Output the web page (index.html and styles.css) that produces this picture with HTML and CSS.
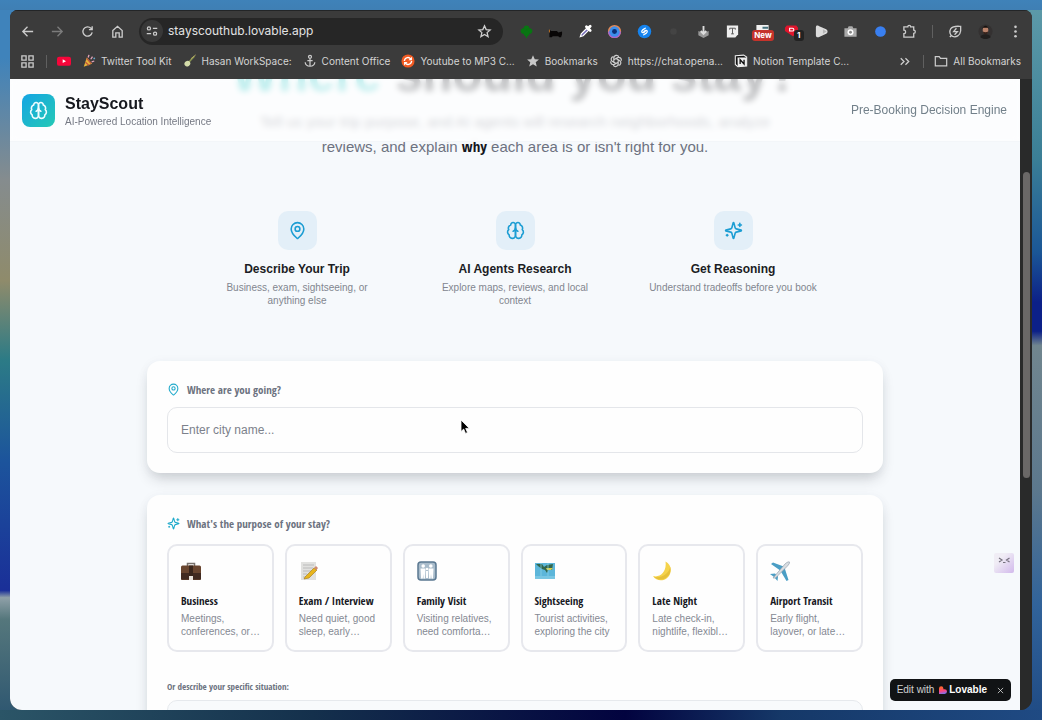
FILE: index.html
```html
<!DOCTYPE html>
<html lang="en">
<head>
<meta charset="utf-8">
<meta name="viewport" content="width=device-width, initial-scale=1">
<title>StayScout</title>
<link rel="stylesheet" href="styles.css">
</head>
<body>
<svg class="defs" aria-hidden="true">
  <symbol id="brain" viewBox="0 0 24 24"><path d="M12 5a3 3 0 1 0-5.997.125 4 4 0 0 0-2.526 5.77 4 4 0 0 0 .556 6.588A4 4 0 1 0 12 18Z"/><path d="M12 5a3 3 0 1 1 5.997.125 4 4 0 0 1 2.526 5.77 4 4 0 0 1-.556 6.588A4 4 0 1 1 12 18Z"/><path d="M15 13a4.500 4.500 0 0 1-3-4 4.500 4.500 0 0 1-3 4"/></symbol>
  <symbol id="pin" viewBox="0 0 24 24"><path d="M20 10c0 5-5.500 10.200-7.400 11.800a1 1 0 0 1-1.200 0C9.500 20.200 4 15 4 10a8 8 0 0 1 16 0"/><circle cx="12" cy="10" r="3"/></symbol>
  <symbol id="sparkles" viewBox="0 0 24 24"><path d="M9.937 15.500A2 2 0 0 0 8.500 14.063l-6.135-1.582a.5.5 0 0 1 0-.962L8.500 9.936A2 2 0 0 0 9.937 8.500l1.582-6.135a.5.5 0 0 1 .963 0L14.063 8.500A2 2 0 0 0 15.500 9.937l6.135 1.581a.5.5 0 0 1 0 .964L15.500 14.063a2 2 0 0 0-1.437 1.437l-1.582 6.135a.5.5 0 0 1-.963 0z"/><path d="M20 3v4M22 5h-4M4 17v2M5 18H3"/></symbol>
</svg>

<div class="window">
  <header class="chrome">
    <div class="toolbar">
      <nav class="nav-buttons" aria-label="Browser navigation">
        <button class="tool" aria-label="Back"><svg class="line" viewBox="0 0 16 16"><path d="M14 8H3M8 3 3 8l5 5"/></svg></button>
        <button class="tool faded" aria-label="Forward"><svg class="line" viewBox="0 0 16 16"><path d="M2 8h11M8 3l5 5-5 5"/></svg></button>
        <button class="tool" aria-label="Reload"><svg class="line" viewBox="0 0 16 16"><path d="M13 9a5 5 0 1 1-1.300-4.500L13 6M13 2.500V6H9.500"/></svg></button>
        <button class="tool" aria-label="Home"><svg class="line" viewBox="0 0 16 16"><path d="M3 7l5-4.500L13 7v7H9.800V9.500H6.200V14H3z"/></svg></button>
      </nav>
      <div class="omnibox">
        <button class="site-info" aria-label="Site information"><svg class="line" viewBox="0 0 16 16"><circle cx="4.500" cy="5" r="1.800"/><path d="M9 5h5M2 11h5"/><circle cx="11.500" cy="11" r="1.800"/></svg></button>
        <input class="url" type="text" aria-label="Address" value="stayscouthub.lovable.app">
        <button class="tool" aria-label="Bookmark this page"><svg class="line" viewBox="0 0 16 16"><path d="M8 2l1.800 4 4.200.4-3.200 2.800 1 4.300L8 11.200l-3.800 2.300 1-4.300L2 6.400 6.200 6z"/></svg></button>
      </div>
      <div class="extensions">
        <button class="tool" aria-label="Extension: clover"><svg viewBox="0 0 16 16"><g fill="#087512"><circle cx="8" cy="4.500" r="3"/><circle cx="4.800" cy="7.500" r="3"/><circle cx="11.200" cy="7.500" r="3"/><circle cx="8" cy="10" r="3"/><path d="M7.300 11h1.400v4H7.300z"/></g></svg></button>
        <button class="tool" aria-label="Extension: cat"><svg viewBox="0 0 16 16"><path d="M1.500 6l2 1.500h6l1.500 1.500 4-1v3l-1 3h-2l-1-1H5l-1 1H1.500z" fill="#080606"/><path d="M1.500 6v3" stroke="#c77724"/></svg></button>
        <button class="tool" aria-label="Extension: color picker"><svg viewBox="0 0 16 16"><path d="M2.500 13.500l1-3 6-6 2 2-6 6z" fill="#7269b5" stroke="#fff" stroke-width="1.300"/><path d="M9 3l4 4M10.500 5l2.500-2.500" stroke="#fff" stroke-width="3" stroke-linecap="round"/></svg></button>
        <button class="tool" aria-label="Extension: lens"><svg viewBox="0 0 16 16"><circle cx="8" cy="8" r="7" fill="#e78a55"/><path d="M1 8a7 7 0 0 0 14 0z" fill="#a464d2"/><circle cx="8" cy="8" r="5.500" fill="#3c8fec"/><circle cx="8" cy="8" r="2.600" fill="#0b2e77"/></svg></button>
        <button class="tool" aria-label="Extension: Shazam"><svg viewBox="0 0 16 16"><circle cx="8" cy="8" r="7.200" fill="#1583ee"/><path d="M8.800 4.500 6 6.300c-2 1.500-.4 3.800 1.300 2.600L8.700 8M7.200 11.500 10 9.700c2-1.500.4-3.800-1.300-2.600L7.300 8" fill="none" stroke="#fff" stroke-width="1.400" stroke-linecap="round"/></svg></button>
        <button class="tool" aria-label="Extension: inactive"><svg viewBox="0 0 16 16"><circle cx="8" cy="8" r="3.500" fill="#444"/></svg></button>
        <button class="tool" aria-label="Extension: downloader"><svg viewBox="0 0 16 16"><path d="M2.500 7.500 8 9.500l5.500-2v4.500L8 15l-5.500-3z" fill="#999"/><path d="M8 2v8M5 7.500 8 10.500l3-3" fill="none" stroke="#ddd" stroke-width="2"/></svg></button>
        <button class="tool" aria-label="Extension: text"><svg viewBox="0 0 16 16"><path d="M2 1.500h12V11l-3 3.500H2z" fill="#eee"/><path d="M5 6V4.500h6V6M8 4.500v6M6.500 10.500h3" fill="none" stroke="#555"/></svg></button>
        <button class="tool tagged" aria-label="Extension: new"><svg viewBox="0 0 16 16"><path d="M1.500 1h13v10h-13z" fill="#f2f2f2"/><path d="M8 4h6" stroke="#44707c" stroke-width="2"/></svg><span class="tag">New</span></button>
        <button class="tool tagged" aria-label="Extension: notifications"><svg viewBox="0 0 16 16"><path d="M1 4 3 1.500h10L15 4v5l-5.500 4L1 7.500z" fill="#df152c"/><path d="M6 8V4.500h3a1.500 1.500 0 0 1 0 3H6" fill="none" stroke="#fff" stroke-width="1.200"/></svg><span class="count">1</span></button>
        <button class="tool" aria-label="Extension: play"><svg viewBox="0 0 16 16"><path d="M2 3.500C2 1.500 4 1.500 5 2l8 3.500c2 1 2 4 0 5L5 14c-1.500.6-3 0-3-2z" fill="#dcdcdc"/><path d="M9.500 5.500 13.500 8l-4 2.500z" fill="#b5b5b5"/></svg></button>
        <button class="tool" aria-label="Extension: camera"><svg viewBox="0 0 16 16"><path d="M1.500 4.500h3.500l1-2h4l1 2h3.500v9h-13z" fill="#aaa"/><circle cx="8" cy="8.800" r="3.200" fill="#fff"/><circle cx="8" cy="8.800" r="1.500" fill="#888"/></svg></button>
        <button class="tool" aria-label="Extension: blue dot"><svg viewBox="0 0 16 16"><circle cx="8" cy="8" r="5.700" fill="#397ff0"/></svg></button>
        <button class="tool" aria-label="Extensions"><svg class="line" viewBox="0 0 16 16"><path d="M2 3h4.200a1.500 1.500 0 0 1 3 0H12.500v3.500a1.700 1.700 0 0 1 0 3.400V14H2v-3.600a1.900 1.900 0 0 0 0-3.800z"/></svg></button>
      </div>
      <span class="rule"></span>
      <div class="profile">
        <button class="tool" aria-label="Energy saver"><svg class="line" viewBox="0 0 16 16"><path d="M13.500 2.500c-2 0-8-1-10.500 2.500-2 3-1 7 2 8.300 3.500 1.200 8-.8 8.500-5.800zM2 14l1.500-2"/><path d="M9 4.500 6 8.200h4L7 11.500"/></svg></button>
        <button class="tool" aria-label="Profile"><svg viewBox="0 0 16 16"><circle cx="8" cy="8" r="7.500" fill="#343131"/><path d="M2.500 14c1-4 10-4 11 0-3 2.500-8 2.500-11 0z" fill="#211f1e"/><ellipse cx="8" cy="6.500" rx="3" ry="4" fill="#b9826a"/><path d="M4.700 5.500c0-5 6.600-5 6.600 0L10.500 4h-5z" fill="#15110f"/><path d="M5.200 8c1.500 1 4 1 5.600 0C10.500 12 5.500 12 5.200 8z" fill="#35221b"/></svg></button>
        <button class="tool" aria-label="Menu"><svg viewBox="0 0 16 16" fill="#ccc"><circle cx="8" cy="3" r="1.400"/><circle cx="8" cy="8" r="1.400"/><circle cx="8" cy="13" r="1.400"/></svg></button>
      </div>
    </div>
    <nav class="bookmarks" aria-label="Bookmarks">
      <button class="tool" aria-label="Apps"><svg class="line" viewBox="0 0 16 16"><path d="M2 2h4.500v4.500H2zM9.500 2H14v4.500H9.500zM2 9.500h4.500V14H2zM9.500 9.500H14V14H9.500z"/></svg></button>
      <span class="rule"></span>
      <a class="bookmark" href="#" aria-label="YouTube"><svg viewBox="0 0 16 16"><rect x="0" y="3" width="16" height="10.500" rx="2.500" fill="#f6063a"/><path d="M6.500 6v4.400L10.300 8.200z" fill="#fff"/></svg></a>
      <a class="bookmark" href="#"><svg viewBox="0 0 16 16"><path d="M2 14.500 5.500 4l6 7z" fill="#e4b33b"/><path d="M4 9.500 8 13M5.500 5l5 6" stroke="#bf513c" stroke-width="1.500"/><path d="M7 4l1-3M10 6l2-3M11 9l3-1" stroke="#e4a4bc" stroke-width="1.500"/><circle cx="14" cy="5" r="1" fill="#6ac"/></svg>Twitter Tool Kit</a>
      <a class="bookmark" href="#"><svg viewBox="0 0 16 16"><path d="M6 10 13 2.500" stroke="#8b9752" stroke-width="1.800"/><path d="M14.500 1 9 5.500" stroke="#b7ad65"/><ellipse cx="5" cy="11" rx="3.500" ry="3" fill="#d4dca9" transform="rotate(-40 5 11)"/></svg>Hasan WorkSpace:</a>
      <a class="bookmark" href="#"><svg class="line" viewBox="0 0 16 16"><circle cx="8" cy="3.200" r="1.700"/><path d="M8 5v9M5 7.500h6M2.500 9.500c.5 6 10.500 6 11 0"/></svg>Content Office</a>
      <a class="bookmark" href="#"><svg viewBox="0 0 16 16"><circle cx="8" cy="8" r="7.500" fill="#f15a22"/><path d="M4 8V7c.8-3 5-4 7-1.500M12 8v1c-.8 3-5 4-7 1.500" fill="none" stroke="#fff" stroke-width="1.600"/><path d="M12.500 3v4h-4zM3.500 13V9h4z" fill="#fff"/></svg>Youtube to MP3 C...</a>
      <a class="bookmark" href="#"><svg viewBox="0 0 16 16" fill="#c8c8c8"><path d="M8 1.500l2 4.400 4.800.4-3.700 3.200 1.200 4.800L8 11.700l-4.300 2.600 1.200-4.800L1.200 6.300 6 5.900z"/></svg>Bookmarks</a>
      <a class="bookmark" href="#"><svg class="line" viewBox="0 0 16 16"><path d="M5.500 9.500v-5a3 3 0 0 1 5.700-1.200M8 11 3.700 8.400A3 3 0 0 1 5 3M10.500 9.500 6 12a3 3 0 0 1-4-3.500M10.500 6.500v5A3 3 0 0 1 5 13M8 5l4.300 2.600A3 3 0 0 1 11 13M5.500 6.500 10 4a3 3 0 0 1 4 3.700M5.500 6.500 8 5l2.500 1.500v3L8 11 5.500 9.500z"/></svg>https://chat.opena...</a>
      <a class="bookmark" href="#"><svg viewBox="0 0 16 16"><path d="M1.500 2 11 1.300l3.500 2.300v10L4.500 14.500 1.500 12z" fill="#111" stroke="#eee" stroke-width="1.200"/><path d="M4 4h10.500v9.600L4.300 14.500z" fill="#eee"/><path d="M7 11.500V6.500l4.500 5v-5" fill="none" stroke="#111" stroke-width="1.500"/></svg>Notion Template C...</a>
      <button class="tool more" aria-label="More bookmarks"><svg class="line" viewBox="0 0 16 16"><path d="M4 4.500 7.500 8 4 11.500M9 4.500 12.500 8 9 11.500"/></svg></button>
      <span class="rule"></span>
      <a class="bookmark" href="#"><svg class="line" viewBox="0 0 16 16"><path d="M1.500 3h4.500l1.500 2h7v8.500h-13z"/></svg>All Bookmarks</a>
    </nav>
  </header>

  <div class="viewport">
    <div class="page">
      <header class="site-header">
        <a class="brand" href="#">
          <span class="logo"><svg class="icon"><use href="#brain"/></svg></span>
          <span class="brand-text"><strong class="brand-name">StayScout</strong><span class="brand-sub">AI-Powered Location Intelligence</span></span>
        </a>
        <span class="tagline">Pre-Booking Decision Engine</span>
      </header>

      <main class="content">
        <section class="hero">
          <h1 class="title"><span class="accent">Where</span> should you stay?</h1>
          <p class="lead">Tell us your trip purpose, and AI agents will research neighborhoods, analyze<br>reviews, and explain <strong class="why">why</strong> each area is or isn't right for you.</p>
        </section>

        <section class="features">
          <article class="feature"><span class="feature-icon"><svg class="icon"><use href="#pin"/></svg></span><h2 class="feature-title">Describe Your Trip</h2><p class="feature-text">Business, exam, sightseeing, or anything else</p></article>
          <article class="feature"><span class="feature-icon"><svg class="icon"><use href="#brain"/></svg></span><h2 class="feature-title">AI Agents Research</h2><p class="feature-text">Explore maps, reviews, and local context</p></article>
          <article class="feature"><span class="feature-icon"><svg class="icon"><use href="#sparkles"/></svg></span><h2 class="feature-title">Get Reasoning</h2><p class="feature-text">Understand tradeoffs before you book</p></article>
        </section>

        <form class="planner">
          <section class="card">
            <label class="label" for="city"><svg class="icon small"><use href="#pin"/></svg>Where are you going?</label>
            <input class="city" id="city" type="text" placeholder="Enter city name...">
          </section>
          <section class="card">
            <h2 class="label"><svg class="icon small"><use href="#sparkles"/></svg>What's the purpose of your stay?</h2>
            <div class="purposes">
              <button class="purpose" type="button"><svg class="emoji" viewBox="0 0 20 20"><path d="M6.500 5V2.500h7V5" fill="none" stroke="#77706b" stroke-width="1.500"/><rect y="4.500" width="20" height="14.500" rx="1.500" fill="#69452f"/><path d="M0 12h20v6.500H0z" fill="#412a20"/><path d="M8 4.500h4v11H8z" fill="#3a261c"/><path d="M8 15h4v4H8z" fill="#e9e3dc"/></svg><span class="purpose-name">Business</span><span class="purpose-text">Meetings,<br>conferences, or…</span></button>
              <button class="purpose" type="button"><svg class="emoji" viewBox="0 0 20 20"><path d="M2 1h15v18H2z" fill="#e1e1df"/><path d="M4 4h11M4 7h10M4 10h8M4 13h4M4 16h3" stroke="#bbb"/><path d="M6 16 15 7l3 2-8 8-5 1z" fill="#e8b51c" stroke="#a07618" stroke-width=".6"/><path d="m15 7 2-2 2 2-1.500 2z" fill="#cf8a71"/></svg><span class="purpose-name">Exam / Interview</span><span class="purpose-text">Need quiet, good<br>sleep, early…</span></button>
              <button class="purpose" type="button"><svg class="emoji" viewBox="0 0 20 20"><rect x="1" y="1" width="18" height="18" rx="3" fill="#a9bccb" stroke="#5b7891" stroke-width="1.500"/><g fill="#fff"><circle cx="6.200" cy="5" r="1.800"/><circle cx="13.800" cy="5" r="1.800"/><circle cx="10" cy="8" r="1.200"/><path d="M3.500 7.500h5l-.5 10H6.500L6.200 13l-.4 4.500H4zM11.500 7.500h5l-.5 10h-1.500L14 13l-.4 4.500H12zM9 10h2v7H9z"/></g></svg><span class="purpose-name">Family Visit</span><span class="purpose-text">Visiting relatives,<br>need comforta…</span></button>
              <button class="purpose" type="button"><svg class="emoji" viewBox="0 0 20 20"><path d="M0 2h20v16H0z" fill="#5cb6da"/><path d="M1 3h6l2 3 3-2 6-1-1 6-3-1-2 4-2-3-3-1-4-3z" fill="#32664c"/><path d="M11 7h7l-2 2h-4z" fill="#d8ce49"/><path d="M6 2v16M13 2v16" stroke="#8ed4e8" stroke-width=".7"/><path d="M0 15h20v3H0z" fill="#79c6e3"/></svg><span class="purpose-name">Sightseeing</span><span class="purpose-text">Tourist activities,<br>exploring the city</span></button>
              <button class="purpose" type="button"><svg class="emoji" viewBox="0 0 20 20"><path d="M13.500.5c4.500 2 6.500 7.500 4.500 12.500-3 7.500-13 8.500-17 2 7 2 14-4 12.500-14.500z" fill="#f5d34b"/><path d="M2 15.800c7 2 15-3.300 16.200-9.800 2.300 9-8.200 17-16.200 9.800z" fill="#e6c03a"/></svg><span class="purpose-name">Late Night</span><span class="purpose-text">Late check-in,<br>nightlife, flexibl…</span></button>
              <button class="purpose" type="button"><svg class="emoji" viewBox="0 0 20 20"><path d="M1 3l2-1.500L15 6l-4 4zM18.500 19 14 5l-4 4 6.500 11zM0 13l5-.5 3 3L7.500 20 4 16z" fill="#4a9ec5"/><path d="M3 17 15 3c2-2 4-2.500 4.500-2S19 3.500 17 5.500L5.500 17z" fill="#d9dde1" stroke="#8494a2" stroke-width=".6"/></svg><span class="purpose-name">Airport Transit</span><span class="purpose-text">Early flight,<br>layover, or late…</span></button>
            </div>
            <label class="sub-label" for="situation">Or describe your specific situation:</label>
            <textarea class="situation" id="situation"></textarea>
          </section>
        </form>
      </main>

      <button class="assistant" aria-label="Assistant"><svg viewBox="0 0 20 20"><defs><linearGradient id="face" x1="0" y1="0" x2="1" y2="1"><stop offset=".3" stop-color="#f0edf5"/><stop offset="1" stop-color="#d2b9ec"/></linearGradient></defs><rect width="20" height="20" rx="2" fill="url(#face)"/><path d="M5 5l3 2-3 2M15.500 5l-3 2 3 2M9 9.500h2.500" fill="none" stroke="#77727f" stroke-width="1.200"/></svg></button>
      <div class="edit-badge">
        <a class="edit-link" href="#">Edit with <svg class="heart" viewBox="0 0 10 10"><defs><linearGradient id="love" x1=".4" y1="0" x2=".6" y2="1"><stop offset=".2" stop-color="#ff6336"/><stop offset=".6" stop-color="#f84487"/><stop offset="1" stop-color="#7477f4"/></linearGradient></defs><path d="M0 3a2.700 2.700 0 0 1 5.500 0v1H7a3 3 0 0 1 0 6H0z" fill="url(#love)"/></svg><strong class="lovable">Lovable</strong></a>
        <button class="close" aria-label="Close"><svg viewBox="0 0 8 8"><path d="M1 1l6 6M7 1 1 7" stroke="#ddd" stroke-width=".9"/></svg></button>
      </div>
    </div>
    <div class="scrollbar"><div class="thumb"></div></div>
  </div>
</div>
<svg class="cursor" viewBox="0 0 10 16" aria-hidden="true"><path d="M1 1v11.500l2.700-2.400 1.800 4.300 2-.9-1.800-4.100H9.300z" fill="#000" stroke="#fff" stroke-width=".8"/></svg>
</body>
</html>
```
FILE: styles.css
```css
* { box-sizing: border-box; }

body {
  margin: 0;
  height: 100vh;
  padding: 10px;
  display: flex;
  overflow: hidden;
  font-family: "Liberation Sans", Arial, sans-serif;
  background:
    linear-gradient(#3f82b9, #3f7fb4) top / 100% 10px no-repeat,
    linear-gradient(90deg, #2b5567, #14304c 30%, #02033f 60%, #153868 75%, #1f4a83) bottom / 100% 10px no-repeat,
    linear-gradient(#3f83bb 8%, #858c8e 25%, #8f8b6b 39%, #2c7b86 50%, #1c549c 64%, #1a2f98 82%, #8fa0a8 83%, #55777c 86%, #2c5570) left / 20px 100% no-repeat,
    linear-gradient(#5e9ba9, #3b7f96 22%, #1b5796 35%, #0c2088 42%, #0c2088 46%, #71868f 48%, #5c788d 68%, #31639a 84%, #1f4a83) right / 20px 100% no-repeat,
    #2c4a62;
}

button, input, textarea { font: inherit; margin: 0; }
button { border: 0; padding: 0; background: none; color: inherit; }
a { color: inherit; text-decoration: none; }
h1, h2, p { margin: 0; }

.defs { position: absolute; width: 0; height: 0; }

.window {
  flex: 1;
  min-width: 0;
  display: flex;
  flex-direction: column;
  overflow: hidden;
  border-radius: 8px 8px 12px 12px;
  background: #2a2a2a;
}

/* Browser chrome */
.chrome {
  display: flex;
  flex-direction: column;
  gap: 4px;
  padding: 7px 8px 5px;
  background: #3b3b3b;
  border-top: 1px solid #232527;
  color: #d4d4d4;
  font: 400 10px/16px Inter, sans-serif;
}
.toolbar { display: flex; align-items: center; height: 26px; }
.nav-buttons { display: flex; gap: 12px; padding-right: 13px; }
.tool { display: grid; place-items: center; width: 18px; height: 18px; flex: none; }
.tool svg { width: 15px; height: 15px; }
.line { fill: none; stroke: #cccccc; stroke-width: 1.400; }
.faded { opacity: .45; }
.omnibox {
  display: flex;
  align-items: center;
  flex: 0 1 364px;
  min-width: 0;
  height: 27px;
  padding: 0 10px 0 2px;
  border-radius: 14px;
  background: #262626;
}
.site-info { display: grid; place-items: center; flex: none; width: 22px; height: 22px; border-radius: 50%; background: #383838; }
.site-info svg { width: 14px; height: 14px; }
.url { flex: 1; min-width: 0; border: 0; padding: 0 0 0 5px; background: none; color: #e3e3e3; font: 400 12px/20px Inter, sans-serif; outline: 0; }
.extensions { flex: 1; display: flex; justify-content: space-between; padding: 0 13px 0 14px; }
.rule { width: 1px; height: 13px; flex: none; background: #606060; }
.profile { display: flex; gap: 12px; padding-left: 13px; }
.tagged { position: relative; }
.tag { position: absolute; top: 8px; left: -1px; padding: 0 2px; border-radius: 3px; background: #c5332b; color: #fff; font: 700 8px/11px Inter, sans-serif; }
.count { position: absolute; top: 8px; right: -3px; width: 10px; border-radius: 3px; background: #222; color: #fff; font: 700 8px/11px Inter, sans-serif; }
.bookmarks { display: flex; align-items: center; gap: 10px; height: 26px; padding: 0 3px 0 0; white-space: nowrap; }
.bookmark { display: flex; align-items: center; gap: 5px; margin-right: 1px; flex: none; }
.bookmark svg { width: 14px; height: 14px; flex: none; }
.bookmark:last-child { margin: 0; }
.more { margin-left: auto; }

/* Scrolled site */
.viewport { flex: 1; min-height: 0; display: flex; }
.page { flex: 1; min-width: 0; position: relative; overflow: hidden; background: #f6f9fc; }
.scrollbar { width: 12px; padding: 93px 2px 0 3px; background: #292a2a; }
.thumb { height: 306px; border-radius: 4px; background: #6a6867; }

.site-header {
  position: absolute;
  inset: 0 0 auto;
  z-index: 1;
  display: flex;
  align-items: center;
  justify-content: space-between;
  height: 63px;
  padding: 0 13px 0 12px;
  background: rgb(255 255 255 / 70%);
  backdrop-filter: blur(3px);
  border-bottom: 1px solid #f3f6f9;
}
.brand { display: flex; align-items: center; gap: 10px; }
.logo { display: grid; place-items: center; width: 33px; height: 33px; border-radius: 8px; background: linear-gradient(135deg, #14a5e4, #25c9b5); color: #effcff; }
.icon { width: 19px; height: 19px; fill: none; stroke: currentColor; stroke-width: 2; stroke-linecap: round; stroke-linejoin: round; }
.brand-text { display: flex; flex-direction: column; padding-top: 2px; }
.brand-name { color: #17191f; font-size: 16px; line-height: 20px; }
.brand-sub { color: #747883; font-size: 10px; line-height: 15px; }
.tagline { color: #72808a; font-size: 12px; }

.hero { margin-top: -33px; text-align: center; }
.title { color: #1b1e25; font-size: 49px; line-height: 56px; }
.accent { color: #25c4c4; }
.lead { margin-top: 7px; color: #6d7280; font-size: 15px; line-height: 25px; }
.why, .label, .sub-label, .purpose-name { font-family: Haettenschweiler, Impact, "Liberation Sans Narrow", "Open Sans Condensed", "DejaVu Sans Condensed", sans-serif; }
.why { color: #15171d; }

.features { display: grid; grid-template-columns: repeat(3, 1fr); gap: 40px; max-width: 614px; margin: 52px auto 0; }
.feature { display: flex; flex-direction: column; align-items: center; text-align: center; }
.feature-icon { display: grid; place-items: center; width: 39px; height: 39px; border-radius: 10px; background: #e3eff8; color: #1c9dd3; }
.feature-title { margin-top: 10px; color: #1b1d24; font-size: 12px; line-height: 18px; }
.feature-text { margin-top: 3px; color: #82868f; font-size: 10px; line-height: 13px; }

.planner { display: flex; flex-direction: column; gap: 22px; max-width: 736px; margin: 54px auto 0; }
.card { padding: 20px; border-radius: 13px; background: #fefefe; box-shadow: 0 8px 14px -3px rgb(40 45 55 / 22%), 0 1px 12px rgb(60 80 110 / 4%); }
.label { display: flex; align-items: center; gap: 7px; height: 16px; color: #6c7280; font-size: 11px; font-weight: 700; }
.small { width: 13px; height: 13px; color: #20aacb; }
.city { display: block; width: 100%; height: 46px; margin-top: 10px; padding: 0 13px; border: 1px solid #e4e6ea; border-radius: 10px; background: #fefefe; color: #333; font-size: 12px; }
.city::placeholder { color: #7c818b; opacity: 1; }
.purposes { display: grid; grid-template-columns: repeat(6, 1fr); gap: 11px; margin-top: 13px; }
.purpose { display: flex; flex-direction: column; min-width: 0; height: 108px; padding: 15px 12px 10px; border: 2px solid #e7e8ed; border-radius: 10px; background: #fefefe; text-align: left; }
.emoji { width: 20px; height: 20px; flex: none; }
.purpose-name { margin-top: 12px; color: #17181e; font-size: 11px; font-weight: 700; line-height: 16px; white-space: nowrap; }
.purpose-text { margin-top: 3px; color: #858993; font-size: 10px; line-height: 13px; white-space: nowrap; }
.sub-label { display: block; margin-top: 28px; color: #6c7280; font-size: 9px; font-weight: 700; line-height: 14px; }
.situation { display: block; width: 100%; height: 80px; margin-top: 6px; border: 1px solid #e6e9ed; border-radius: 10px; background: #f8fafc; resize: none; }

.assistant { position: absolute; right: 6px; top: 474px; width: 20px; height: 20px; }
.assistant svg { display: block; }
.edit-badge { position: absolute; right: 9px; bottom: 9px; display: flex; align-items: center; gap: 9px; height: 22px; padding: 0 7px; border-radius: 5px; background: #111315; color: #d2d2d2; font: 400 10px/14px "Liberation Sans", Arial, sans-serif; }
.edit-link { display: flex; align-items: center; gap: 2px; white-space: pre; }
.heart { width: 8px; height: 8px; }
.lovable { color: #fff; font-weight: 700; }
.close { display: grid; place-items: center; width: 8px; height: 8px; }
.close svg { width: 7px; height: 7px; }
.cursor { position: absolute; left: 460px; top: 419px; width: 10px; height: 16px; }
```
